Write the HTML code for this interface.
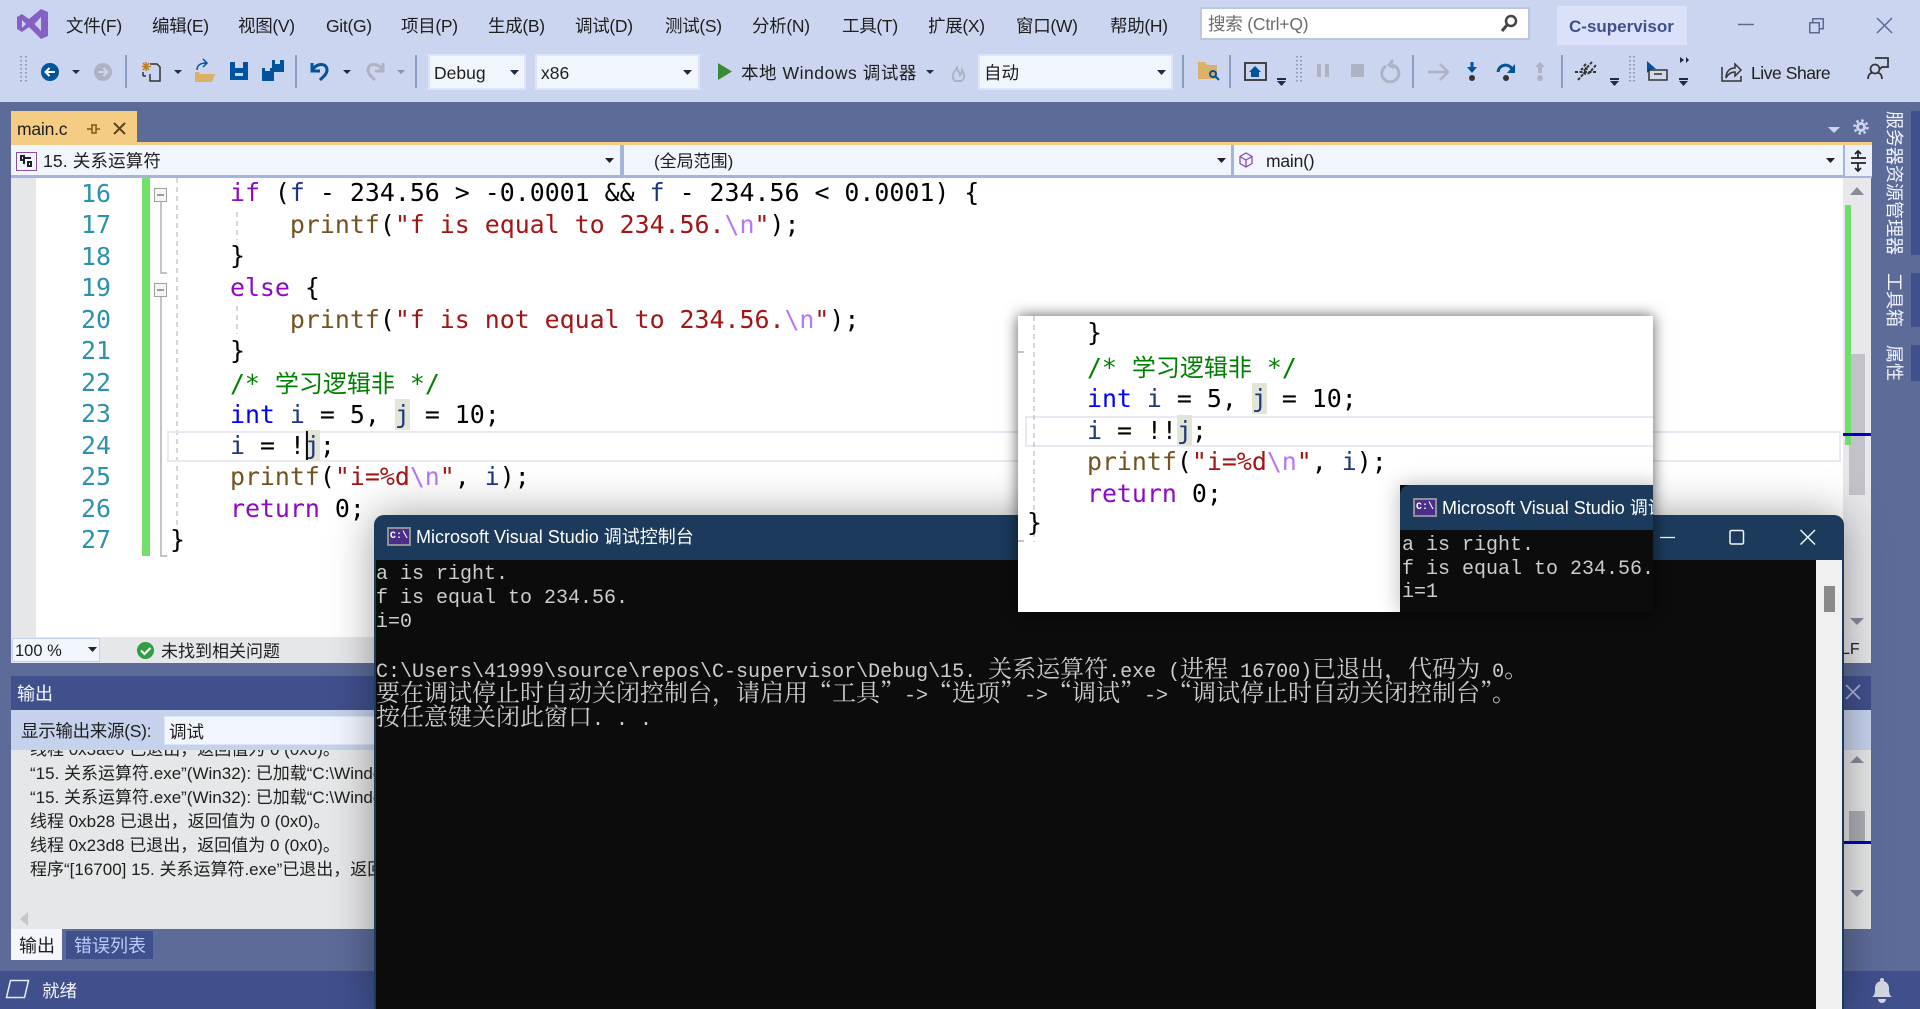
<!DOCTYPE html>
<html lang="zh-CN"><head><meta charset="utf-8"><title>VS</title>
<style>
html,body{margin:0;padding:0;width:1920px;height:1009px;overflow:hidden;background:#5d6b99}
body{position:relative;font-family:"Liberation Sans","Noto Sans CJK SC",sans-serif;color:#1e1e1e}
div,span.a{box-sizing:border-box}
.a{position:absolute}
.t{position:absolute;white-space:pre}
.m{top:13px;font-size:17.5px;line-height:26px;letter-spacing:-.3px}
.combo{position:absolute;background:#f1f5fe;border:2px solid #dce4f9}
.l{position:absolute;left:170px;height:31px;line-height:31px;font:24.9px/31px "DejaVu Sans Mono","Noto Sans CJK SC",monospace;white-space:pre;color:#000}
.n{position:absolute;left:60px;width:51px;text-align:right;font:24.9px/31px "DejaVu Sans Mono",monospace;color:#2b91af}
.k{color:#8f08c4}.b{color:#0000ff}.f{color:#74531f}.s{color:#a31515}.e{color:#b776fb}.v{color:#1f377f}.g{color:#008000}
.cj{font-size:24px;font-family:"Noto Sans CJK SC",sans-serif}
.hl{background:#e2e6d6;display:inline-block;height:31px;vertical-align:top}
.o{position:absolute;left:30px;font-size:17px;line-height:24px;white-space:pre;color:#1e1e1e}
.c{position:absolute;font:20px/24px "Liberation Mono","Noto Serif CJK SC",monospace;color:#cccccc;white-space:pre}
.c i{font:24px/0 "Noto Serif CJK SC",serif;font-style:normal}
.tt{color:#fff;font-size:18px;line-height:24px;white-space:pre;position:absolute}
.ci{position:absolute;width:24px;height:19px;background:#4a2f8a;border:2px solid #8f8f99;color:#fff;font:bold 10px/15px "Liberation Mono",monospace;text-align:center}
.vt{position:absolute;left:1884px;writing-mode:vertical-rl;text-orientation:sideways;font-size:18px;line-height:20px;color:#f2f5ff;white-space:pre}
</style></head><body>

<!-- top chrome -->
<div class="a" style="left:0;top:0;width:1920px;height:102px;background:#ccd5f0"></div>
<svg class="a" style="left:0;top:0" width="1920" height="102" viewBox="0 0 1920 102">
<path fill="#8661c5" fill-rule="evenodd" d="M41 9l7 3v24l-7 3-12-12-7 5-5-3V17l5-3 7 5zM22 20v8l4-4zM41 17l-6.500 7 6.500 7z"/>
<g fill="#8c9dc4"><rect x="125" y="55" width="2" height="33"/><rect x="295" y="55" width="2" height="33"/><rect x="415" y="55" width="2" height="33"/><rect x="1182" y="55" width="2" height="33"/><rect x="1229" y="55" width="2" height="33"/><rect x="1412" y="55" width="2" height="33"/><rect x="1561" y="55" width="2" height="33"/></g>
<g fill="none" stroke="#7f89a8" stroke-width="1.500" stroke-dasharray="1.500 2.500"><path d="M21 56v28M26 56v28M1297 56v28M1301 56v28M1630 56v28M1634 56v28"/></g>
<circle cx="50" cy="72" r="9" fill="#00539c"/><path d="M55 72H46M49.500 68l-4 4 4 4" stroke="#fff" stroke-width="2" fill="none"/>
<circle cx="103" cy="72" r="9" fill="#aeb3c4"/><path d="M98 72h9M103.500 68l4 4-4 4" stroke="#ccd5f0" stroke-width="2" fill="none"/>
<g fill="#1e2a46"><path d="M72 70h8l-4 4zM174 70h8l-4 4zM343 70h8l-4 4zM1277 78h9v2h-9zM1277 81h9l-4.500 5zM1610 78h9v2h-9zM1610 81h9l-4.500 5zM1679 78h9v2h-9zM1679 81h9l-4.500 5zM1680 57l4 3-4 3zM1686 57l3 3-3 3z"/></g>
<path d="M397 70h8l-4 4z" fill="#8c91a3"/>
<path d="M146 62v9M142 66.500h9M143 63l6 7M149 63l-6 7" stroke="#c27d1a" stroke-width="1.500"/>
<path d="M150 64h7l3 3v14h-10v-7M143 72v4M143 76h3" stroke="#333" stroke-width="1.500" fill="none"/>
<path d="M195 80V72h4l1 2h15l-3 8h-17z" fill="#dcb067"/><path d="M197 70c0-5 4-7 9-7M203 59l4 4-4 4" stroke="#00539c" stroke-width="1.500" fill="none"/>
<path d="M230 62h18v18h-18z" fill="#00539c"/><rect x="235" y="62" width="8" height="6" fill="#ccd5f0"/><rect x="235" y="73" width="8" height="3" fill="#ccd5f0"/>
<path d="M262 68h12v13h-12zM272 60h12v12h-12z" fill="#00539c"/><rect x="275" y="60" width="5" height="4" fill="#ccd5f0"/><rect x="265" y="68" width="5" height="3" fill="#ccd5f0"/>
<path d="M312 63v8h8M312 71c3-8 15-9 15-1 0 4-4 7-7 10" stroke="#00539c" stroke-width="3" fill="none"/>
<path d="M383 63v8h-8M383 71c-3-8-15-9-15-1 0 4 4 7 7 10" stroke="#aeb3c4" stroke-width="3" fill="none"/>
<path d="M718 63l14 8.500-14 8.500z" fill="#388a34"/>
<path d="M926 70h8l-4 4z" fill="#1e2a46"/>
<path d="M955 81c-4-4-2-8 2-13 0 3 3 4 3 7 2-2 2-3 2-5 3 4 3 9-1 11z" fill="none" stroke="#aeb3c4" stroke-width="2"/>
<path d="M1198 62h7l2 3h10v14h-19z" fill="#dcb067"/><circle cx="1213" cy="74" r="3" fill="none" stroke="#00539c" stroke-width="2"/><path d="M1215 76l4 4" stroke="#00539c" stroke-width="2"/>
<rect x="1245" y="63" width="21" height="17" fill="none" stroke="#444" stroke-width="2"/><path d="M1255 66l-6 6h2v5h8v-5h2z" fill="#00539c"/>
<g fill="#aeb3c4"><rect x="1317" y="64" width="4" height="13"/><rect x="1325" y="64" width="4" height="13"/><rect x="1351" y="64" width="13" height="13"/><circle cx="1540" cy="78" r="3"/><path d="M1540 62l5 5h-3v6h-4v-6h-3z"/></g>
<path d="M1386 66a8.500 8.500 0 1 0 6-1M1393 60l-4 5 5 3" stroke="#aeb3c4" stroke-width="3" fill="none"/>
<path d="M1428 72h19M1440 64l8 8-8 8" stroke="#aeb3c4" stroke-width="2.500" fill="none"/>
<circle cx="1472" cy="78" r="3" fill="#333"/><path d="M1470.500 62h3v5h3.500l-5 6-5-6h3.500z" fill="#00539c"/>
<circle cx="1506" cy="78" r="3" fill="#333"/><path d="M1498 72c1-8 11-9 14-3" stroke="#00539c" stroke-width="3" fill="none"/><path d="M1515 64v9h-8z" fill="#00539c"/>
<path d="M1578 80l8-9c3-3-3-4-5-1M1586 64l-3 3M1592 62l-8 9c-2 3 4 4 6 1l6-7M1575 72h22" stroke="#333" stroke-width="2" fill="none" stroke-dasharray="3 1.500"/>
<path d="M1647 61v12l3-3 2 3 2-1-2-3h4z" fill="#00539c"/>
<rect x="1649" y="70" width="18" height="10" fill="#d4d8e8" stroke="#333" stroke-width="1.500"/><path d="M1654 74h8" stroke="#333" stroke-width="1.500"/>
<path d="M1722 67v14h19v-5M1726 78c0-7 4-10 9-10v-4l6 6-6 6v-4c-4 0-7 2-9 6z" stroke="#333" stroke-width="1.500" fill="none"/>
<circle cx="1875" cy="69" r="4.500" fill="none" stroke="#333" stroke-width="1.700"/><path d="M1868 79c0-4 2-6 4-6M1882 79c0-4-2-6-4-6M1875 58h13v9h-6l-2 2" stroke="#333" stroke-width="1.700" fill="none"/>
<path d="M1738 24.500h16" stroke="#5a6a94" stroke-width="1.500"/>
<path d="M1809.750 22.750h9.500v10h-9.500zM1812.750 22v-3.250h10.500v10h-3.500" stroke="#5a6a94" stroke-width="1.500" fill="none"/>
<path d="M1877 18l15 15M1892 18l-15 15" stroke="#5a6a94" stroke-width="1.500"/>
</svg>
<span class="t m" style="left:66px">文件(F)</span>
<span class="t m" style="left:152px">编辑(E)</span>
<span class="t m" style="left:238px">视图(V)</span>
<span class="t m" style="left:326px">Git(G)</span>
<span class="t m" style="left:401px">项目(P)</span>
<span class="t m" style="left:488px">生成(B)</span>
<span class="t m" style="left:575px">调试(D)</span>
<span class="t m" style="left:665px">测试(S)</span>
<span class="t m" style="left:752px">分析(N)</span>
<span class="t m" style="left:842px">工具(T)</span>
<span class="t m" style="left:928px">扩展(X)</span>
<span class="t m" style="left:1016px">窗口(W)</span>
<span class="t m" style="left:1110px">帮助(H)</span>
<div class="a" style="left:1200px;top:7px;width:330px;height:33px;background:#fff;border:2px solid #bcc6e0"></div>
<svg class="a" style="left:1489px;top:7px" width="36" height="33"><circle cx="22" cy="14" r="5" fill="none" stroke="#444" stroke-width="2.500"/><path d="M18 18l-5 6" stroke="#444" stroke-width="3"/></svg>
<span class="t" style="left:1208px;top:11px;font-size:17.500px;line-height:26px;color:#6d6d6d;letter-spacing:-.2px">搜索 (Ctrl+Q)</span>
<div class="a" style="left:1557px;top:6px;width:130px;height:39px;background:#dbe1f8"></div>
<span class="t" style="left:1569px;top:14px;font-size:17px;font-weight:bold;line-height:26px;color:#40508d">C-supervisor</span>

<div class="combo" style="left:428px;top:54px;width:98px;height:36px"></div>
<span class="t" style="left:434px;top:60px;font-size:17.500px;line-height:26px">Debug</span>
<div class="combo" style="left:535px;top:54px;width:165px;height:36px"></div>
<span class="t" style="left:541px;top:60px;font-size:17.500px;line-height:26px">x86</span>
<div class="combo" style="left:978px;top:54px;width:195px;height:36px"></div>
<span class="t" style="left:984px;top:60px;font-size:17.500px;line-height:26px">自动</span>
<svg class="a" style="left:0;top:60px" width="1920" height="30"><path fill="#1e2a46" d="M510 10h9l-4.500 5zM683 10h9l-4.500 5zM1157 10h9l-4.500 5z"/></svg>
<span class="t" style="left:741px;top:60px;font-size:17.500px;line-height:26px;letter-spacing:.55px">本地 Windows 调试器</span>
<span class="t" style="left:1751px;top:60px;font-size:17.500px;line-height:26px;letter-spacing:-.45px">Live Share</span>

<!-- document tab -->
<div class="a" style="left:11px;top:111px;width:126px;height:31px;background:#f5cc84"></div>
<span class="t" style="left:17px;top:117px;font-size:17.500px;line-height:24px;letter-spacing:-.2px">main.c</span>
<svg class="a" style="left:80px;top:116px" width="60" height="24"><path d="M7 13h5M12 9v8h4V9zM16 13h4M11 9h6" stroke="#7a5a1e" stroke-width="1.500" fill="none"/><path d="M34 7l11 11M45 7L34 18" stroke="#5a421a" stroke-width="2"/></svg>
<svg class="a" style="left:1820px;top:116px" width="52" height="28"><path d="M8 11h12l-6 6z" fill="#ccd5f0"/><g stroke="#ccd5f0" fill="none"><circle cx="41" cy="11" r="3.500" stroke-width="3"/><circle cx="41" cy="11" r="6.500" stroke-width="2.500" stroke-dasharray="2.500 2.600"/></g></svg>
<div class="a" style="left:11px;top:142px;width:1861px;height:3px;background:#f5cc84"></div>
<div class="a" style="left:11px;top:145px;width:1861px;height:33px;background:#a4b5d9"></div>
<div class="a" style="left:11px;top:145px;width:609px;height:30px;background:#f1f5fe"></div>
<div class="a" style="left:624px;top:145px;width:607px;height:30px;background:#f1f5fe"></div>
<div class="a" style="left:1234px;top:145px;width:609px;height:30px;background:#f1f5fe"></div>
<div class="a" style="left:1845px;top:145px;width:27px;height:31px;background:#ebeffc"></div>
<svg class="a" style="left:0;top:145px" width="1920" height="32">
<rect x="16.500" y="7.500" width="20" height="18" fill="#f1f5fe" stroke="#8a4f9e"/><path d="M21 11h3v4h-3zM28 17h3v4h-3zM24 13h7M24 13v6" stroke="#222" stroke-width="2" fill="none"/>
<path fill="#222" d="M605 13h9l-4.500 5zM1217 13h9l-4.500 5zM1826 13h9l-4.500 5z"/>
<path d="M1246 8l6 3.500v7l-6 3.500-6-3.500v-7zM1240 11.500l6 3.500 6-3.500M1246 15v7" stroke="#8a4fb0" stroke-width="1.300" fill="none"/>
<path d="M1851 13h15M1851 18h15M1858 7v6M1858 18v7M1855 9l3-3 3 3M1855 23l3 3 3-3" stroke="#222" stroke-width="1.700" fill="none"/>
</svg>
<span class="t" style="left:43px;top:149px;font-size:17.500px;line-height:24px;letter-spacing:.15px">15. 关系运算符</span>
<span class="t" style="left:654px;top:150px;font-size:17px;line-height:24px;letter-spacing:0">(全局范围)</span>
<span class="t" style="left:1266px;top:149px;font-size:17.500px;line-height:24px;letter-spacing:-.2px">main()</span>

<!-- editor -->
<div class="a" style="left:11px;top:178px;width:25px;height:459px;background:#e6e7e8"></div>
<div class="a" style="left:36px;top:178px;width:1807px;height:459px;background:#fff"></div>
<div class="a" style="left:1843px;top:178px;width:28px;height:485px;background:#e8e8ec"></div>
<div class="a" style="left:11px;top:637px;width:1860px;height:26px;background:#e6e7ea"></div>
<div class="a" style="left:12px;top:638px;width:88px;height:24px;background:#f1f5fe;border:1px solid #c5d0ea"></div>
<span class="t" style="left:15px;top:640px;font-size:16.500px;line-height:22px">100 %</span>
<svg class="a" style="left:0;top:630px" width="1920" height="40"><path d="M88 17h9l-4.500 5z" fill="#222"/><circle cx="145.500" cy="20.500" r="8.500" fill="#2f9e44"/><path d="M141 20.500l3.500 3.500 6-6" stroke="#fff" stroke-width="2.200" fill="none"/></svg>
<span class="t" style="left:161px;top:640px;font-size:17px;line-height:24px;letter-spacing:0">未找到相关问题</span>
<span class="t" style="left:1841px;top:640px;font-size:16px;line-height:20px;color:#222">LF</span>

<div class="a" style="left:142px;top:178px;width:8px;height:378px;background:#72e06a"></div>
<svg class="a" style="left:150px;top:178px" width="100" height="390">
<path d="M11 24v71h6M11 119v259h6" stroke="#b0b0b0" stroke-width="1.500" fill="none"/>
<path d="M27 0v378M87 34v28M87 128v28" stroke="#c8c8c8" stroke-width="1.500" stroke-dasharray="5 4" fill="none"/>
<rect x="4.500" y="10.500" width="12" height="13" fill="#f5f5f5" stroke="#a0a0a0"/><path d="M7 17h7" stroke="#444"/>
<rect x="4.500" y="105.500" width="12" height="13" fill="#f5f5f5" stroke="#a0a0a0"/><path d="M7 112h7" stroke="#444"/>
</svg>
<div class="a" style="left:167px;top:431px;width:1674px;height:31px;border:2.500px solid #e9e9f1"></div>

<div class="n" style="top:178px">16</div>
<div class="n" style="top:209px">17</div>
<div class="n" style="top:241px">18</div>
<div class="n" style="top:272px">19</div>
<div class="n" style="top:304px">20</div>
<div class="n" style="top:335px">21</div>
<div class="n" style="top:367px">22</div>
<div class="n" style="top:398px">23</div>
<div class="n" style="top:430px">24</div>
<div class="n" style="top:461px">25</div>
<div class="n" style="top:493px">26</div>
<div class="n" style="top:524px">27</div>

<div class="l" style="top:177px">    <span class="k">if</span> (<span class="v">f</span> - 234.56 &gt; -0.0001 &amp;&amp; <span class="v">f</span> - 234.56 &lt; 0.0001) {</div>
<div class="l" style="top:209px">        <span class="f">printf</span>(<span class="s">"f is equal to 234.56.</span><span class="e">\n</span><span class="s">"</span>);</div>
<div class="l" style="top:240px">    }</div>
<div class="l" style="top:272px">    <span class="k">else</span> {</div>
<div class="l" style="top:304px">        <span class="f">printf</span>(<span class="s">"f is not equal to 234.56.</span><span class="e">\n</span><span class="s">"</span>);</div>
<div class="l" style="top:335px">    }</div>
<div class="l g" style="top:366px">    /* <span class="cj">学习逻辑非</span> */</div>
<div class="l" style="top:399px">    <span class="b">int</span> <span class="v">i</span> = 5, <span class="hl v">j</span> = 10;</div>
<div class="l" style="top:430px">    <span class="v">i</span> = !<span class="hl v">j</span>;</div>
<div class="l" style="top:461px">    <span class="f">printf</span>(<span class="s">"i=%d</span><span class="e">\n</span><span class="s">"</span>, <span class="v">i</span>);</div>
<div class="l" style="top:493px">    <span class="k">return</span> 0;</div>
<div class="l" style="top:524px">}</div>
<div class="a" style="left:306px;top:431px;width:2px;height:29px;background:#111"></div>

<!-- editor scrollbar -->
<svg class="a" style="left:1843px;top:178px" width="28" height="485">
<path d="M7 17l7-8 7 8z" fill="#8a8a99"/><rect x="6" y="176" width="16" height="141" fill="#c2c3c9"/><rect x="2" y="27" width="6" height="240" fill="#6ee06a"/><rect x="0" y="255" width="28" height="3" fill="#0000c8"/><path d="M7 440h14l-7 7z" fill="#8a8a99"/>
</svg>

<!-- right side tool strips -->
<div class="a" style="left:1911px;top:111px;width:9px;height:144px;background:#40508d"></div>
<div class="a" style="left:1911px;top:273px;width:9px;height:54px;background:#40508d"></div>
<div class="a" style="left:1911px;top:345px;width:9px;height:36px;background:#40508d"></div>
<span class="vt" style="top:111px">服务器资源管理器</span>
<span class="vt" style="top:273px">工具箱</span>
<span class="vt" style="top:345px">属性</span>

<!-- output panel -->
<div class="a" style="left:11px;top:676px;width:1860px;height:34px;background:#40508d"></div>
<span class="t" style="left:17px;top:682px;font-size:18px;line-height:24px;color:#f4f6ff">输出</span>
<svg class="a" style="left:1844px;top:684px" width="20" height="18"><path d="M2 1l14 14M16 1L2 15" stroke="#aab4d6" stroke-width="1.800"/></svg>
<div class="a" style="left:11px;top:710px;width:1860px;height:40px;background:#c6d1ec"></div>
<span class="t" style="left:21px;top:719px;font-size:17.500px;line-height:24px;letter-spacing:-.3px">显示输出来源(S):</span>
<div class="a" style="left:164px;top:716px;width:400px;height:29px;background:#f1f5fe;border:1px solid #dce4f9"></div>
<span class="t" style="left:169px;top:720px;font-size:17.500px;line-height:24px">调试</span>
<div class="a" style="left:11px;top:750px;width:1860px;height:179px;background:#e6e7e8;overflow:hidden"></div>
<div class="a" style="left:0;top:750px;width:400px;height:179px;overflow:hidden">
<div class="o" style="top:-12px">线程 0x3ae0 已退出，返回值为 0 (0x0)。</div>
<div class="o" style="top:12px">“15. 关系运算符.exe”(Win32): 已加载“C:\Windows\SysWOW64\ntdll.dll”</div>
<div class="o" style="top:36px">“15. 关系运算符.exe”(Win32): 已加载“C:\Windows\SysWOW64\kernel32.dll”</div>
<div class="o" style="top:60px">线程 0xb28 已退出，返回值为 0 (0x0)。</div>
<div class="o" style="top:84px">线程 0x23d8 已退出，返回值为 0 (0x0)。</div>
<div class="o" style="top:108px">程序“[16700] 15. 关系运算符.exe”已退出，返回值为 0 (0x0)。</div>
<svg class="a" style="left:18px;top:160px" width="12" height="18"><path d="M10 2v14L2 9z" fill="#c5c7d0"/></svg>
</div>
<svg class="a" style="left:1844px;top:750px" width="27" height="179">
<path d="M6 13l7-7 7 7z" fill="#8a8a99"/><rect x="5" y="61" width="16" height="32" fill="#aeafb6"/><rect x="0" y="91" width="27" height="3" fill="#0000c8"/><path d="M6 140h14l-7 7z" fill="#8a8a99"/>
</svg>
<div class="a" style="left:11px;top:929px;width:51px;height:31px;background:#f5f6fb"></div>
<span class="t" style="left:19px;top:934px;font-size:18px;line-height:24px">输出</span>
<div class="a" style="left:66px;top:931px;width:87px;height:28px;background:#40508d"></div>
<span class="t" style="left:74px;top:934px;font-size:18px;line-height:24px;color:#b6cdf8">错误列表</span>

<!-- status bar -->
<div class="a" style="left:0;top:971px;width:1920px;height:38px;background:#40508d"></div>
<svg class="a" style="left:0;top:971px" width="40" height="38"><path d="M10.500 9.500h18l-4 17h-18z" fill="none" stroke="#e8ecf8" stroke-width="1.500"/></svg>
<span class="t" style="left:42px;top:979px;font-size:17.500px;line-height:24px;color:#f2f4fc">就绪</span>
<svg class="a" style="left:1868px;top:975px" width="30" height="30"><path d="M4 22c3-2 3-5 3-9 0-4 3-7 7-7s7 3 7 7c0 4 0 7 3 9z" fill="#d3d6e0"/><rect x="12" y="3" width="4" height="4" rx="2" fill="#d3d6e0"/><path d="M10 24h8a4 4 0 0 1-8 0z" fill="#d3d6e0"/></svg>

<!-- console window -->
<div class="a" style="left:374px;top:515px;width:1470px;height:494px;background:#1b3a5c;border-radius:10px 10px 0 0;box-shadow:0 0 44px rgba(0,0,0,.38);overflow:hidden">
  <div class="a" style="left:2px;top:45px;width:1440px;height:449px;background:#0c0c0c"></div>
  <div class="a" style="left:1442px;top:45px;width:26px;height:449px;background:#f0f0f0"></div>
  <div class="a" style="left:1450px;top:71px;width:11px;height:26px;background:#8a8a8a"></div>
</div>
<div class="ci" style="left:387px;top:527px">C:\</div>
<span class="tt" style="left:416px;top:525px">Microsoft Visual Studio 调试控制台</span>
<svg class="a" style="left:1655px;top:525px" width="170" height="28"><path d="M5 12.500h15" stroke="#f4f4f4" stroke-width="1.300"/><rect x="75" y="5.500" width="13.500" height="13.500" rx="1.500" fill="none" stroke="#f4f4f4" stroke-width="1.500"/><path d="M145.500 5l14.500 14.500M160 5l-14.500 14.500" stroke="#f4f4f4" stroke-width="1.500"/></svg>
<div class="c" style="left:376px;top:563px">a is right.</div>
<div class="c" style="left:376px;top:587px">f is equal to 234.56.</div>
<div class="c" style="left:376px;top:611px">i=0</div>
<div class="c" style="left:376px;top:661px">C:\Users\41999\source\repos\C-supervisor\Debug\15. <i>关系运算符</i>.exe (<i>进程</i> 16700)<i>已退出，代码为</i> 0<i>。</i></div>
<div class="c" style="left:376px;top:685px"><i>要在调试停止时自动关闭控制台，请启用“工具”</i>-&gt;<i>“选项”</i>-&gt;<i>“调试”</i>-&gt;<i>“调试停止时自动关闭控制台”。</i></div>
<div class="c" style="left:376px;top:709px"><i>按任意键关闭此窗口</i>. . .</div>

<!-- pasted overlay screenshot -->
<div class="a" style="left:1018px;top:316px;width:635px;height:296px;background:#fff;box-shadow:0 0 14px rgba(0,0,0,.65);overflow:hidden">
  <div class="a" style="left:7px;top:100px;width:640px;height:31px;border:2.500px solid #e9e9f1"></div>
  <svg class="a" style="left:0;top:0" width="40" height="296"><path d="M16 0v226" stroke="#c8c8c8" stroke-width="1.500" stroke-dasharray="5 4"/><path d="M0 36h6M0 225h6" stroke="#b0b0b0" stroke-width="1.500"/></svg>
  <div class="l" style="left:9px;top:1px">    }</div>
  <div class="l g" style="left:9px;top:34px">    /* <span class="cj">学习逻辑非</span> */</div>
  <div class="l" style="left:9px;top:67px">    <span class="b">int</span> <span class="v">i</span> = 5, <span class="hl v">j</span> = 10;</div>
  <div class="l" style="left:9px;top:99px">    <span class="v">i</span> = !!<span class="hl v">j</span>;</div>
  <div class="l" style="left:9px;top:130px">    <span class="f">printf</span>(<span class="s">"i=%d</span><span class="e">\n</span><span class="s">"</span>, <span class="v">i</span>);</div>
  <div class="l" style="left:9px;top:162px">    <span class="k">return</span> 0;</div>
  <div class="l" style="left:9px;top:191px">}</div>
  <div class="a" style="left:382px;top:169px;width:260px;height:127px;background:#0c0c0c;box-shadow:0 0 20px rgba(0,0,0,.28)"></div>
  <div class="a" style="left:382px;top:169px;width:260px;height:45px;background:#1b3a5c;border-radius:10px 0 0 0"></div>
  <div class="ci" style="left:395px;top:182px">C:\</div>
  <span class="tt" style="left:424px;top:180px">Microsoft Visual Studio 调试控制台</span>
  <div class="c" style="left:384px;top:218px">a is right.</div>
  <div class="c" style="left:384px;top:242px">f is equal to 234.56.</div>
  <div class="c" style="left:384px;top:265px">i=1</div>
</div>
</body></html>
